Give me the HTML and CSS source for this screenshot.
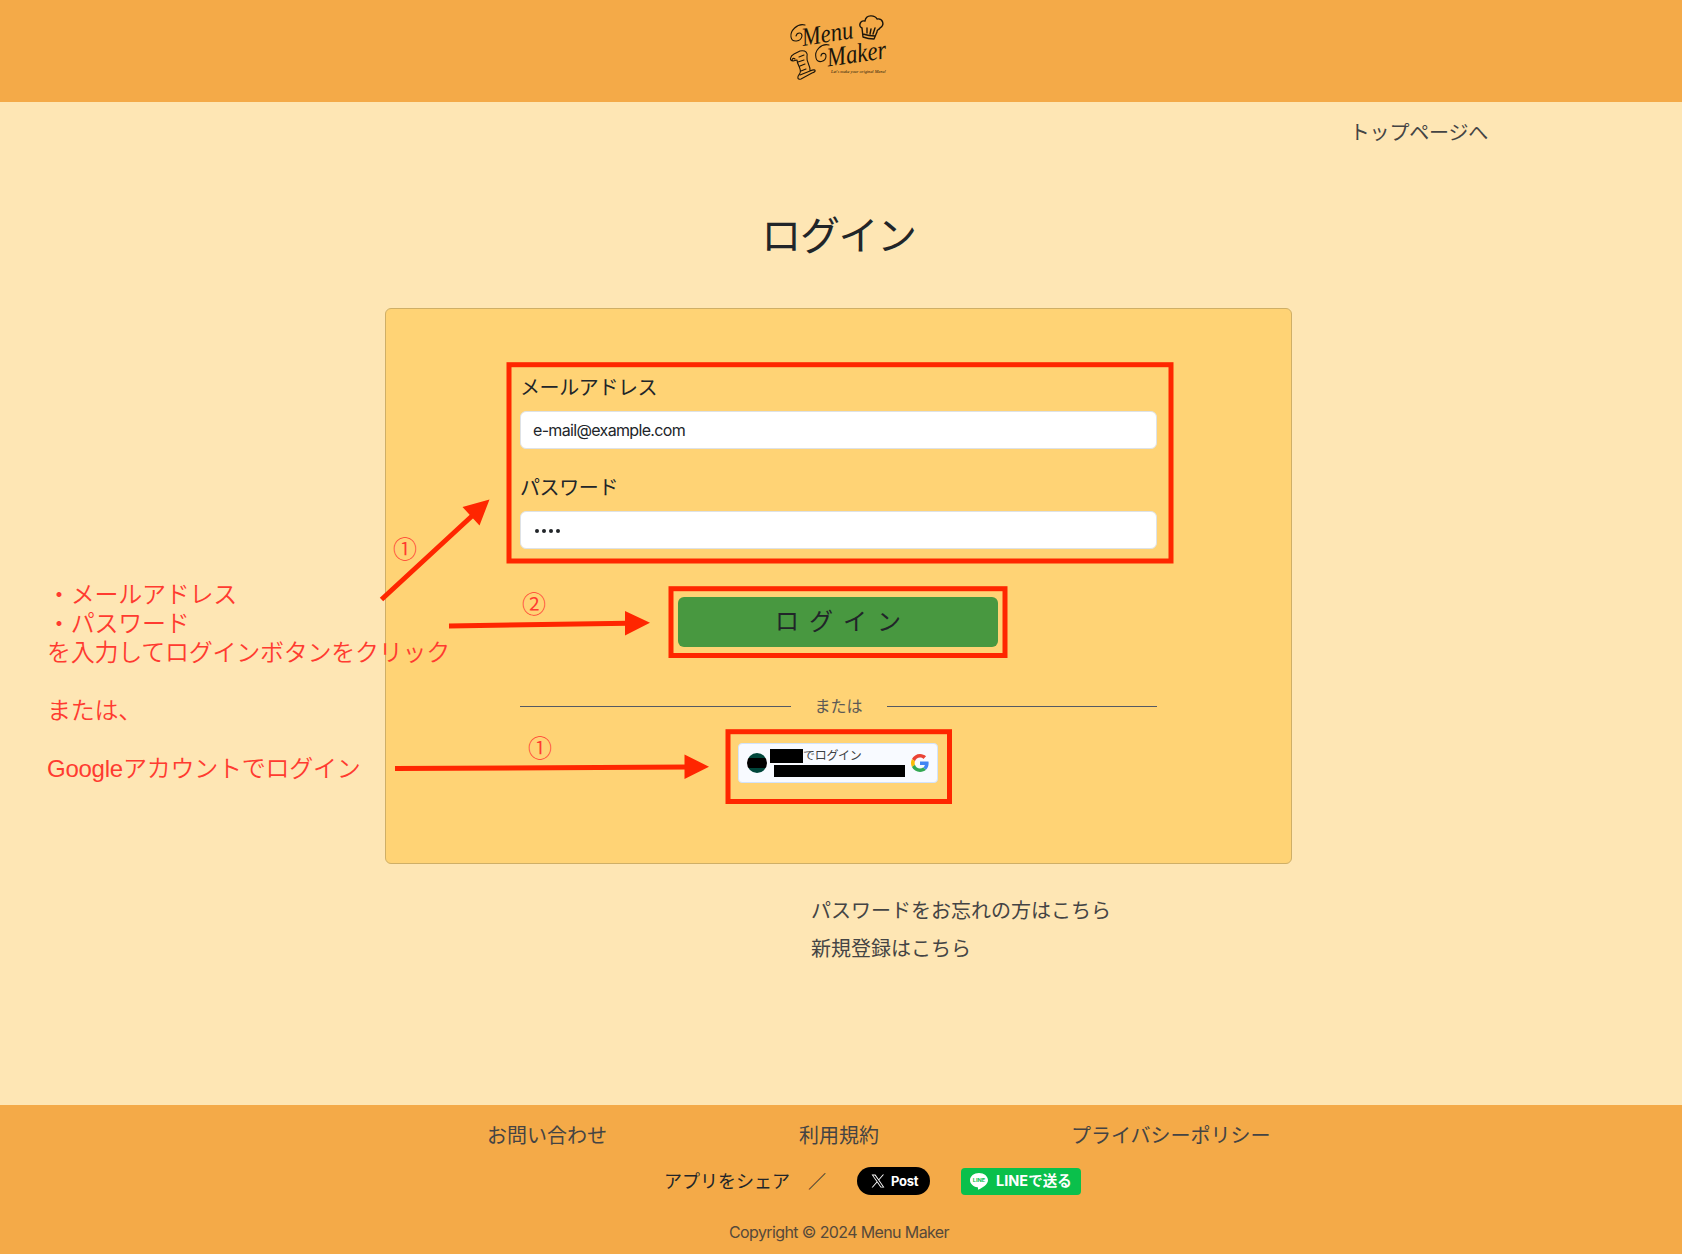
FILE: index.html
```html
<!DOCTYPE html>
<html lang="ja">
<head>
<meta charset="utf-8">
<title>Menu Maker</title>
<link rel="stylesheet" href="styles.css">
</head>
<body>
<header class="header">
  <svg class="logo" width="106" height="72" viewBox="786 12 106 72" role="img" aria-label="Menu Maker">
    <g fill="none" stroke="#1b150b" stroke-linecap="round" stroke-linejoin="round">
      <path stroke-width="1.100" d="M805 25C797 23 790 31 791 37C792 43 801 42 802 36C802 32 797 32 796 36"/>
      <path stroke-width="1.100" d="M829 45C821 43 814 51 816 58C817 64 826 62 826 56C826 52 821 53 821 56"/>
      <path stroke-width="1.400" d="M863 37L862 28C858 26 860 20 865 21C866 14 875 15 877 19C883 18 885 25 880 28C878 31 877 29 877 32L874 39Q868 39 863 37ZM863 34Q869 36 875 36M867 28V33M871 29L870 34M875 28L873 34"/>
      <path stroke-width="1.100" d="M793 61C789 61 790 56 794 54L800 51C806 50 808 53 807 57C806 62 811 66 810 71C817 68 816 72 812 73L801 79C797 80 797 77 800 73C802 69 797 65 797 60L793 61C791 60 793 57 795 59M799 57L804 55M798 62L804 60M800 66L805 64M801 71L806 69M800 75L810 71"/>
    </g>
    <g class="logo-name">
      <text transform="translate(803 46) rotate(-9)" textLength="52" lengthAdjust="spacingAndGlyphs" font-size="26">Menu</text>
      <text transform="translate(828 66.500) rotate(-8)" textLength="60" lengthAdjust="spacingAndGlyphs" font-size="27">Maker</text>
      <text transform="translate(831 73)" textLength="55" lengthAdjust="spacingAndGlyphs" font-size="5">Let's make your original Menu!</text>
    </g>
  </svg>
</header>

<main class="main">
  <nav class="top-nav"><a class="link" href="#">トップページへ</a></nav>
  <h1 class="title">ログイン</h1>
  <form class="card">
    <label class="label" for="email">メールアドレス</label>
    <input class="input" id="email" type="text" value="e-mail@example.com">
    <label class="label" for="password">パスワード</label>
    <div class="input password" id="password"><i></i><i></i><i></i><i></i></div>
    <button class="submit" type="button">ログイン</button>
    <div class="divider"><span>または</span></div>
    <div class="google">
      <span class="avatar"></span>
      <span class="account">
        <span class="account-row"><b class="mask mask-name"></b>でログイン</span>
        <b class="mask mask-mail"></b>
      </span>
      <svg class="g-logo" width="18" height="18" viewBox="0 0 48 48">
        <path fill="#EA4335" d="M24 9.5c3.54 0 6.71 1.22 9.21 3.6l6.85-6.85C35.9 2.38 30.47 0 24 0 14.62 0 6.51 5.38 2.56 13.22l7.98 6.19C12.43 13.72 17.74 9.5 24 9.5z"/>
        <path fill="#4285F4" d="M46.98 24.55c0-1.57-.15-3.09-.38-4.55H24v9.02h12.94c-.58 2.96-2.26 5.48-4.78 7.18l7.73 6c4.51-4.18 7.09-10.36 7.09-17.65z"/>
        <path fill="#FBBC05" d="M10.53 28.59c-.48-1.45-.76-2.99-.76-4.59s.27-3.14.76-4.59l-7.98-6.19C.92 16.46 0 20.12 0 24c0 3.88.92 7.54 2.56 10.78l7.97-6.19z"/>
        <path fill="#34A853" d="M24 48c6.48 0 11.93-2.13 15.89-5.81l-7.73-6c-2.15 1.45-4.92 2.3-8.16 2.3-6.26 0-11.57-4.22-13.47-9.91l-7.98 6.19C6.51 42.62 14.62 48 24 48z"/>
      </svg>
    </div>
  </form>
  <div class="help">
    <a class="link" href="#">パスワードをお忘れの方はこちら</a>
    <a class="link" href="#">新規登録はこちら</a>
  </div>
</main>

<footer class="footer">
  <nav class="footer-nav">
    <a class="link" href="#">お問い合わせ</a>
    <a class="link" href="#">利用規約</a>
    <a class="link" href="#">プライバシーポリシー</a>
  </nav>
  <div class="share">
    <span class="share-text">アプリをシェア　／</span>
    <a class="post" href="#">
      <svg width="14" height="14" viewBox="0 0 24 24" fill="#fff"><path d="M14.100 10.300 22.300 1h-2l-7.100 8.100L7.600 1H1l8.600 12.200L1 23h2l7.500-8.600 6 8.600H23zm-2.600 3-.9-1.200L3.700 2.400h2.900l5.600 7.900.9 1.200 7.200 10.200h-2.900z"/></svg>
      <span>Post</span>
    </a>
    <a class="line" href="#">
      <svg width="18" height="17" viewBox="0 0 18 17"><path fill="#fff" d="M9 0C4 0 0 3.200 0 7.200c0 3.500 3.200 6.400 7.400 7 .8.200.7.700.5 2.100 0 .4.200.5.600.300C12 14.800 18 11.500 18 7.200 18 3.200 14 0 9 0z"/><text x="9" y="9" text-anchor="middle" textLength="12.500" lengthAdjust="spacingAndGlyphs" font-size="5" font-weight="700" fill="#0ac04b">LINE</text></svg>
      <span>LINEで送る</span>
    </a>
  </div>
  <p class="copyright">Copyright © 2024 Menu Maker</p>
</footer>

<svg class="marks" width="1682" height="1254" viewBox="0 0 1682 1254">
  <g fill="none" stroke="#ff2600" stroke-width="5">
    <rect x="509" y="364.700" width="662" height="196.300"/>
    <rect x="671" y="588.700" width="334" height="66.800"/>
    <rect x="728" y="731.700" width="221.500" height="69.800"/>
    <path d="M381.500 599.500L472 516M449 626L628 623.300M395 768.500L688 767"/>
  </g>
  <path fill="#ff2600" d="M489.500 499.500L462.500 507L479.500 525.500ZM650 622.700L625 611V635.500ZM709 766.700L684.500 754.500V779Z"/>
</svg>
<p class="note">・メールアドレス
・パスワード
を入力してログインボタンをクリック

または、

<span class="latin">Google</span>アカウントでログイン</p>
<span class="step step-fields">①</span>
<span class="step step-submit">②</span>
<span class="step step-google">①</span>
</body>
</html>
```
FILE: styles.css
```css
* { box-sizing: border-box; }

body {
  margin: 0;
  position: relative;
  width: 1682px;
  height: 1254px;
  overflow: hidden;
  display: flex;
  flex-direction: column;
  background: #fee6b4;
  color: #212529;
  font-family: Inter, "Noto Sans CJK JP", sans-serif;
  font-size: 16px;
  line-height: 24px;
}

.header {
  height: 102px;
  padding: 12px 4px 0 0;
  background: #f4aa48;
  text-align: center;
  line-height: 0;
}
.logo { overflow: visible; }
.logo-name {
  fill: #1b150b;
  font-family: "Liberation Serif", serif;
  font-style: italic;
}

.link {
  color: #444;
  text-decoration: none;
  font-size: 20px;
  line-height: 30px;
}

.main { height: 1003px; }
.top-nav {
  padding: 16px 194px 0 0;
  text-align: right;
  line-height: 30px;
  letter-spacing: -.2px;
}
.title {
  margin: 63px 0 0;
  padding-right: 5px;
  text-align: center;
  font-size: 40px;
  line-height: 48px;
  font-weight: 400;
  letter-spacing: -1.4px;
}

.card {
  width: 907px;
  height: 556px;
  margin: 48px 0 0 385px;
  padding: 64px 134px 0;
  border: 1px solid #cfaf66;
  border-radius: 6px;
  background: #ffd375;
}
.label {
  display: block;
  font-size: 20px;
  line-height: 30px;
  letter-spacing: -.4px;
}
.input {
  display: block;
  width: 637px;
  height: 38px;
  margin: 8px 0 24px;
  padding: 0 12px;
  border: 1px solid #dee2e6;
  border-radius: 6px;
  background: #fff;
  color: #212529;
  font: 16px/24px Inter, sans-serif;
  letter-spacing: -.66px;
}
.password {
  display: flex;
  align-items: center;
  gap: 3px;
  padding: 2px 14px 0;
}
.password i {
  width: 4px;
  height: 4px;
  border-radius: 50%;
  background: #212529;
}
.submit {
  display: block;
  width: 320px;
  height: 50px;
  margin: 48px 0 0 158px;
  padding: 0 0 5px 10px;
  border: 0;
  border-radius: 6px;
  background: #489840;
  color: #212529;
  font: 24px/36px "Noto Sans CJK JP", sans-serif;
  letter-spacing: 10px;
}
.divider {
  display: flex;
  align-items: center;
  gap: 24px;
  margin-top: 47px;
  color: #5d5a55;
}
.divider::before, .divider::after {
  content: "";
  flex: 1;
  height: 1px;
  background: #555963;
}
.google {
  display: flex;
  width: 200px;
  height: 40px;
  margin: 25px 0 0 218px;
  padding: 0 8px;
  align-items: center;
  border: 1px solid #d2e3fc;
  border-radius: 4px;
  background: #f8faff;
}
.avatar {
  width: 20px;
  height: 20px;
  flex: none;
  border-radius: 50%;
  background: linear-gradient(#00463b 5px, #000 5px 15px, #00463b 15px);
}
.account {
  display: flex;
  flex: none;
  flex-direction: column;
  gap: 2px;
  width: 135px;
  margin: 0 6px 0 3px;
}
.account-row {
  display: flex;
  align-items: center;
  height: 14px;
  font-size: 12px;
  line-height: 14px;
  letter-spacing: -.3px;
  color: #3c4043;
}
.mask { display: block; background: #000; }
.mask-name { width: 33px; height: 14px; }
.mask-mail { width: 131px; height: 12px; margin-left: 4px; }
.g-logo { flex: none; }

.help {
  display: flex;
  flex-direction: column;
  gap: 8px;
  margin: 32px 0 0 811px;
}

.footer {
  height: 149px;
  padding-top: 16px;
  background: #f4aa48;
}
.footer-nav {
  display: flex;
  gap: 192px;
  padding-left: 487px;
  line-height: 30px;
}
.share {
  display: flex;
  height: 30px;
  margin-top: 15px;
  padding-left: 664px;
  align-items: center;
}
.share-text {
  width: 193px;
  padding-top: 2px;
  font-size: 18px;
  white-space: nowrap;
}
.post, .line {
  display: flex;
  align-items: center;
  color: #fff;
  font-weight: 700;
  text-decoration: none;
}
.post {
  width: 73px;
  height: 28px;
  padding-left: 14px;
  gap: 6px;
  border-radius: 14px;
  background: #000;
  font-size: 13px;
  letter-spacing: -.3px;
}
.line {
  width: 120px;
  height: 27px;
  margin-left: 31px;
  padding-left: 9px;
  gap: 8px;
  border-radius: 4px;
  background: #0ac04b;
  font-size: 14.5px;
  white-space: nowrap;
}
.copyright {
  margin: 24px 0 0;
  padding-right: 4px;
  text-align: center;
  color: #56493a;
  letter-spacing: -.62px;
}

/* Walkthrough annotations over the page */
.marks {
  position: absolute;
  left: 0;
  top: 0;
}
.note, .step {
  position: absolute;
  margin: 0;
  color: #ff3b30;
  font: 350 24px/29px "Noto Sans CJK JP", sans-serif;
  white-space: pre;
}
.note { left: 47px; top: 577.5px; letter-spacing: -.25px; }
.latin { font-family: "Liberation Sans", sans-serif; }
.step-fields { left: 393px; top: 533px; }
.step-submit { left: 522px; top: 588px; }
.step-google { left: 528px; top: 732px; }
```
